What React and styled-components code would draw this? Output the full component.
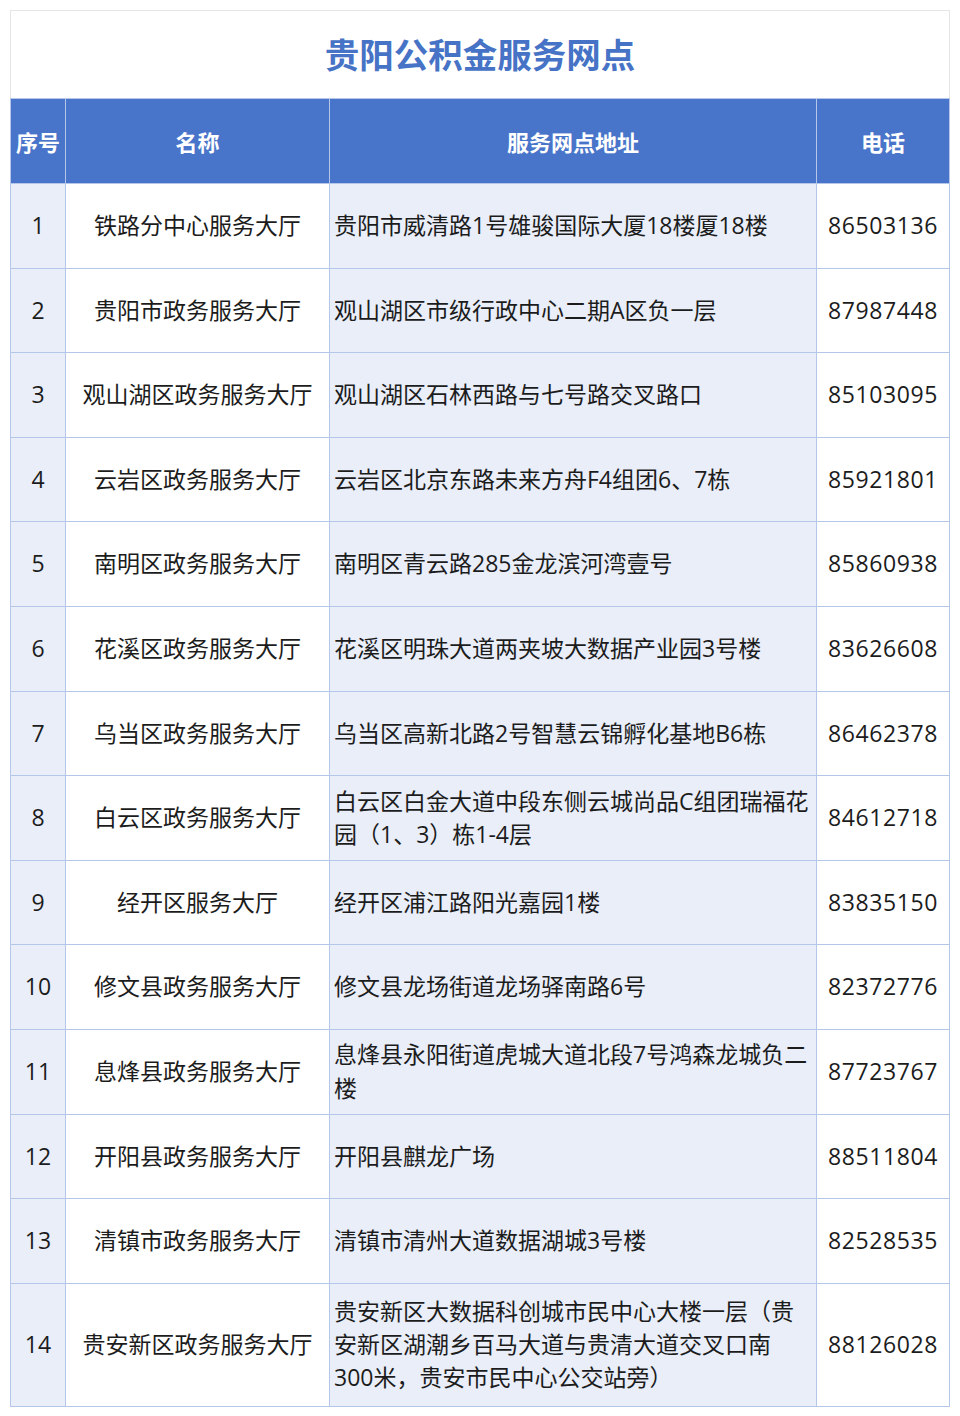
import React from "react";
import styled, { createGlobalStyle } from "styled-components";

const GlobalStyle = createGlobalStyle`
  html, body { margin: 0; padding: 0; background: #ffffff; }
  body { font-family: "Open Sans", "Noto Sans CJK SC", sans-serif; }
`;

const Page = styled.div`
  padding: 10px 10px 9px 10px;
  width: 940px;
`;

const TitleBox = styled.div`
  height: 87px;
  border: 1px solid #e6e6e6;
  border-bottom: none;
  display: flex;
  align-items: center;
  justify-content: center;
`;

const Title = styled.h1`
  margin: 0 0 2px 0;
  font-family: "Noto Sans CJK SC", sans-serif;
  font-size: 34.5px;
  line-height: 1.2;
  font-weight: 700;
  color: #4673c6;
`;

const Table = styled.div`
  display: grid;
  grid-template-columns: 54px 263px 486px 132px;
  grid-template-rows: 84px repeat(${(p) => p.$rows - 1}, 83.6px) 122px;
  gap: 1px;
  padding: 1px;
  background: #b4c7e9;
`;

const HeadCell = styled.div`
  background: #4874c9;
  color: #ffffff;
  font-family: "Noto Sans CJK SC", sans-serif;
  font-weight: 700;
  font-size: 22px;
  display: flex;
  align-items: center;
  justify-content: center;
  white-space: nowrap;
`;

const Cell = styled.div`
  background: ${(p) => (p.$shade ? "#e9eef9" : "#ffffff")};
  color: #1c1c1c;
  font-size: 23px;
  line-height: 33.4px;
  letter-spacing: ${(p) => (p.$digits ? "0.6px" : "0")};
  display: flex;
  flex-direction: column;
  justify-content: center;
  align-items: ${(p) => (p.$left ? "flex-start" : "center")};
  padding: ${(p) => (p.$left ? "0 11px 0 4px" : "0")};
  white-space: nowrap;
  overflow: hidden;
`;

const Line = styled.span`
  display: block;
`;

const rows = [
  ["1", "铁路分中心服务大厅", ["贵阳市威清路1号雄骏国际大厦18楼厦18楼"], "86503136"],
  ["2", "贵阳市政务服务大厅", ["观山湖区市级行政中心二期A区负一层"], "87987448"],
  ["3", "观山湖区政务服务大厅", ["观山湖区石林西路与七号路交叉路口"], "85103095"],
  ["4", "云岩区政务服务大厅", ["云岩区北京东路未来方舟F4组团6、7栋"], "85921801"],
  ["5", "南明区政务服务大厅", ["南明区青云路285金龙滨河湾壹号"], "85860938"],
  ["6", "花溪区政务服务大厅", ["花溪区明珠大道两夹坡大数据产业园3号楼"], "83626608"],
  ["7", "乌当区政务服务大厅", ["乌当区高新北路2号智慧云锦孵化基地B6栋"], "86462378"],
  ["8", "白云区政务服务大厅", ["白云区白金大道中段东侧云城尚品C组团瑞福花", "园（1、3）栋1-4层"], "84612718"],
  ["9", "经开区服务大厅", ["经开区浦江路阳光嘉园1楼"], "83835150"],
  ["10", "修文县政务服务大厅", ["修文县龙场街道龙场驿南路6号"], "82372776"],
  ["11", "息烽县政务服务大厅", ["息烽县永阳街道虎城大道北段7号鸿森龙城负二", "楼"], "87723767"],
  ["12", "开阳县政务服务大厅", ["开阳县麒龙广场"], "88511804"],
  ["13", "清镇市政务服务大厅", ["清镇市清州大道数据湖城3号楼"], "82528535"],
  [
    "14",
    "贵安新区政务服务大厅",
    ["贵安新区大数据科创城市民中心大楼一层（贵", "安新区湖潮乡百马大道与贵清大道交叉口南", "300米，贵安市民中心公交站旁）"],
    "88126028",
  ],
];

export default function App() {
  return (
    <>
      <GlobalStyle />
      <Page>
        <TitleBox>
          <Title>贵阳公积金服务网点</Title>
        </TitleBox>
        <Table $rows={rows.length}>
          <HeadCell>序号</HeadCell>
          <HeadCell>名称</HeadCell>
          <HeadCell>服务网点地址</HeadCell>
          <HeadCell>电话</HeadCell>
          {rows.map(([no, name, addr, tel]) => (
            <React.Fragment key={no}>
              <Cell $shade>{no}</Cell>
              <Cell>{name}</Cell>
              <Cell $shade $left>
                {addr.map((l, i) => (
                  <Line key={i}>{l}</Line>
                ))}
              </Cell>
              <Cell $digits>{tel}</Cell>
            </React.Fragment>
          ))}
        </Table>
      </Page>
    </>
  );
}
